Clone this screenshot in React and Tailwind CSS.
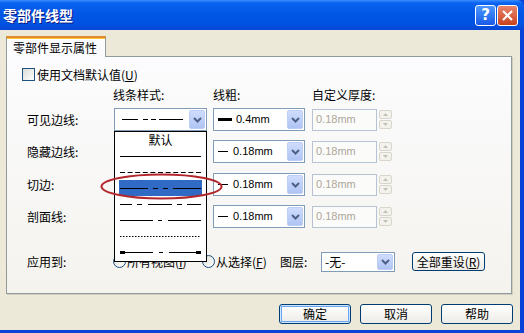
import React from 'react';

const cjk = "font-['Noto_Sans_CJK_SC','Noto_Sans_CJK_JP',sans-serif]";
const latin = "font-['Liberation_Sans',Arial,sans-serif]";

// line patterns: segments [from, to] in px, 81px wide
const solid = [[0, 81]];
const dashed = Array.from({ length: 11 }, (_, i) => [i * 7.6, i * 7.6 + 5]);
const dashDot = [[0, 28], [33, 38], [43, 48], [53, 81]];
const longShort = [[0, 12], [17, 22], [28, 52], [57, 62], [67, 81]];
const center = [[0, 33], [38, 42], [48, 81]];
const dotted = Array.from({ length: 27 }, (_, i) => [i * 3, i * 3 + 1.5]);
const phantom = [[0, 33], [39, 43], [49, 81]];

function Pattern({ segs, width = 81, color = '#000', caps = false }) {
  return (
    <svg width={width} height="5" className="block">
      {segs.map(([a, b], i) => (
        <rect key={i} x={a} y="2" width={b - a} height="1" fill={color} />
      ))}
      {caps && (
        <>
          <rect x="0" y="1" width="5" height="3" fill={color} />
          <rect x={width - 5} y="1" width="5" height="3" fill={color} />
        </>
      )}
    </svg>
  );
}

function Chevron({ color = '#4D6185' }) {
  return (
    <svg width="9" height="6" viewBox="0 0 9 6">
      <polyline points="1,1 4.5,4.5 8,1" fill="none" stroke={color} strokeWidth="2" />
    </svg>
  );
}

function DropButton() {
  return (
    <div className="w-[16px] h-full flex items-center justify-center rounded-[2px] border border-[#BCCDF6] bg-gradient-to-b from-[#CFDCFD] to-[#AFC4F4]">
      <Chevron />
    </div>
  );
}

function Combo({ width, height = 23, children }) {
  return (
    <div
      className="flex items-stretch border border-[#7F9DB9] bg-white p-[1px] shrink-0"
      style={{ width, height }}
    >
      <div className="flex-1 flex items-center overflow-hidden">{children}</div>
      <DropButton />
    </div>
  );
}

function WidthValue({ thick, value }) {
  return (
    <div className={`flex items-center pl-[3px] text-[11px] text-black ${latin}`}>
      {thick ? (
        <div className="w-[14px] h-[3px] bg-black" />
      ) : (
        <div className="w-[10px] h-[1px] bg-black" />
      )}
      <span className={thick ? 'ml-[4px]' : 'ml-[5px]'}>{value}</span>
    </div>
  );
}

function Spinner() {
  return (
    <div className="w-[13px] h-[19px] flex flex-col gap-[1px] ml-[2px] self-center">
      <div className="flex-1 flex items-center justify-center rounded-[2px] border border-[#D8D6CC] bg-[#F3F2EC]">
        <svg width="5" height="3"><polygon points="0,3 2.5,0 5,3" fill="#C3C1B5" /></svg>
      </div>
      <div className="flex-1 flex items-center justify-center rounded-[2px] border border-[#D8D6CC] bg-[#F3F2EC]">
        <svg width="5" height="3"><polygon points="0,0 2.5,3 5,0" fill="#C3C1B5" /></svg>
      </div>
    </div>
  );
}

function LineRow({ label, thick, value, mt, children }) {
  return (
    <div className="flex items-center h-[23px] pl-[20px]" style={{ marginTop: mt }}>
      <div className={`w-[87px] text-[12px] text-black ${cjk}`}>{label}</div>
      <Combo width={93}>{children}</Combo>
      <div className="ml-[6px]">
        <Combo width={92}>
          <WidthValue thick={thick} value={value} />
        </Combo>
      </div>
      <div className={`ml-[7px] w-[65px] h-[22px] border border-[#B5C3D3] bg-[#FBFBFA] flex items-center pl-[3px] text-[11px] text-[#ACA899] ${latin}`}>
        0.18mm
      </div>
      <Spinner />
    </div>
  );
}

function Radio() {
  return (
    <div className="w-[13px] h-[13px] rounded-full border border-[#1C5180] bg-gradient-to-br from-[#DCDCD7] to-white shrink-0" />
  );
}

function XPButton({ children, primary, width = 72, height = 20 }) {
  return (
    <div
      className={`flex items-center justify-center rounded-[3px] border border-[#003C74] bg-gradient-to-b from-white to-[#ECEBE6] text-[12px] text-black ${cjk} ${
        primary ? 'shadow-[inset_0_0_0_1px_#CEE7FF,inset_0_0_0_2px_#69A5F2]' : ''
      }`}
      style={{ width, height }}
    >
      {children}
    </div>
  );
}

const listItems = [
  { text: '默认' },
  { segs: solid },
  { segs: dashed },
  { segs: dashDot, selected: true },
  { segs: longShort },
  { segs: center },
  { segs: dotted },
  { segs: phantom, caps: true },
];

export default function App() {
  return (
    <div className="relative w-[524px] h-[333px] overflow-hidden bg-[#0842D6] flex flex-col">
      {/* title bar */}
      <div className="h-[30px] shrink-0 flex items-center rounded-tr-[7px] bg-[linear-gradient(to_bottom,#3A8DFF_0%,#0A62F0_10%,#0056E6_45%,#0052E2_80%,#0845D4_100%)]">
        <div className={`pl-[3px] text-[14px] font-bold text-white [text-shadow:1px_1px_0_#0A1883] ${cjk}`}>
          零部件线型
        </div>
        <div className="ml-auto mr-[6px] flex gap-[1px]">
          <div className="w-[21px] h-[21px] rounded-[3px] border border-white bg-gradient-to-b from-[#4C97FF] to-[#1B59E6] flex items-center justify-center text-white text-[15px] font-bold leading-none font-['DejaVu_Sans',sans-serif]">
            ?
          </div>
          <div className="w-[21px] h-[21px] rounded-[3px] border border-white bg-gradient-to-b from-[#E8846A] to-[#C9411C] flex items-center justify-center">
            <svg width="11" height="11" viewBox="0 0 11 11">
              <line x1="1" y1="1" x2="10" y2="10" stroke="white" strokeWidth="2.2" />
              <line x1="10" y1="1" x2="1" y2="10" stroke="white" strokeWidth="2.2" />
            </svg>
          </div>
        </div>
      </div>

      {/* client */}
      <div className="w-[520px] h-[300px] bg-[#ECE9D8] flex flex-col pt-[6px] pl-[6px]">
        <div className="flex">
          <div className={`relative z-10 -mb-[1px] h-[21px] w-[100px] border border-b-0 border-[#919B9C] border-t-[#E68B2C] border-t-2 bg-[#FCFCFE] shadow-[inset_0_1px_0_#FFC83C] flex items-center pl-[6px] text-[12px] text-black ${cjk}`}>
            零部件显示属性
          </div>
        </div>
        <div className="w-[506px] h-[238px] border border-[#919B9C] bg-gradient-to-b from-[#FCFCFE] to-[#F4F3EE] flex flex-col shadow-[1px_1px_0_#D0CEBF]">
          <div className="flex items-center h-[13px] mt-[11px] pl-[15px]">
            <div className="w-[13px] h-[13px] border border-[#1C5180] bg-gradient-to-br from-[#DCDCD7] to-white" />
            <span className={`ml-[2px] text-[12px] text-black ${cjk}`}>
              使用文档默认值(<u>U</u>)
            </span>
          </div>

          <div className={`flex items-center h-[16px] mt-[6px] pl-[106px] text-[12px] text-black ${cjk}`}>
            <div className="w-[100px]">线条样式:</div>
            <div className="w-[99px]">线粗:</div>
            <div>自定义厚度:</div>
          </div>

          <LineRow label="可见边线:" thick value="0.4mm" mt={5}>
            <div className="pl-[6px]">
              <Pattern segs={[[0, 16], [21, 26], [29, 34], [37, 61]]} width={61} />
            </div>
          </LineRow>
          <LineRow label="隐藏边线:" value="0.18mm" mt={9} />
          <LineRow label="切边:" value="0.18mm" mt={10} />
          <LineRow label="剖面线:" value="0.18mm" mt={9} />

          <div className={`flex items-center h-[21px] mt-[23px] pl-[20px] text-[12px] text-black ${cjk}`}>
            <div className="w-[86px]">应用到:</div>
            <div className="w-[89px] flex items-center">
              <Radio />
              <span className="ml-[1px]">所有视图(<u>I</u>)</span>
            </div>
            <div className="w-[78px] flex items-center">
              <Radio />
              <span className="ml-[1px]">从选择(<u>F</u>)</span>
            </div>
            <div className="w-[41px]">图层:</div>
            <Combo width={74} height={20}>
              <span className="pl-[2px]">-无-</span>
            </Combo>
            <div className="ml-[17px]">
              <XPButton width={73} height={19}>
                全部重设(<u>R</u>)
              </XPButton>
            </div>
          </div>
        </div>

        <div className="flex justify-end gap-[9px] mt-[10px] pr-[7px]">
          <XPButton primary>确定</XPButton>
          <XPButton>取消</XPButton>
          <XPButton>帮助</XPButton>
        </div>
      </div>

      {/* open drop-down list of the line style combo */}
      <div className="absolute left-[114px] top-[131px] z-20 w-[93px] h-[131px] border border-black bg-white flex flex-col">
        {listItems.map((item, i) => (
          <div key={i} className="h-[16px] flex items-center">
            {item.text ? (
              <div className={`w-full text-center text-[12px] text-black ${cjk}`}>{item.text}</div>
            ) : (
              <div
                className={`ml-[4px] w-[83px] h-[16px] flex items-center pl-[1px] ${
                  item.selected ? 'bg-[#316AC5]' : ''
                }`}
              >
                <Pattern segs={item.segs} caps={item.caps} />
              </div>
            )}
          </div>
        ))}
      </div>

      {/* red highlight ellipse */}
      <svg className="absolute left-0 top-0 z-30 pointer-events-none" width="524" height="333">
        <ellipse cx="161.5" cy="186.5" rx="60" ry="12" fill="none" stroke="#B3262B" strokeWidth="2" />
      </svg>
    </div>
  );
}
